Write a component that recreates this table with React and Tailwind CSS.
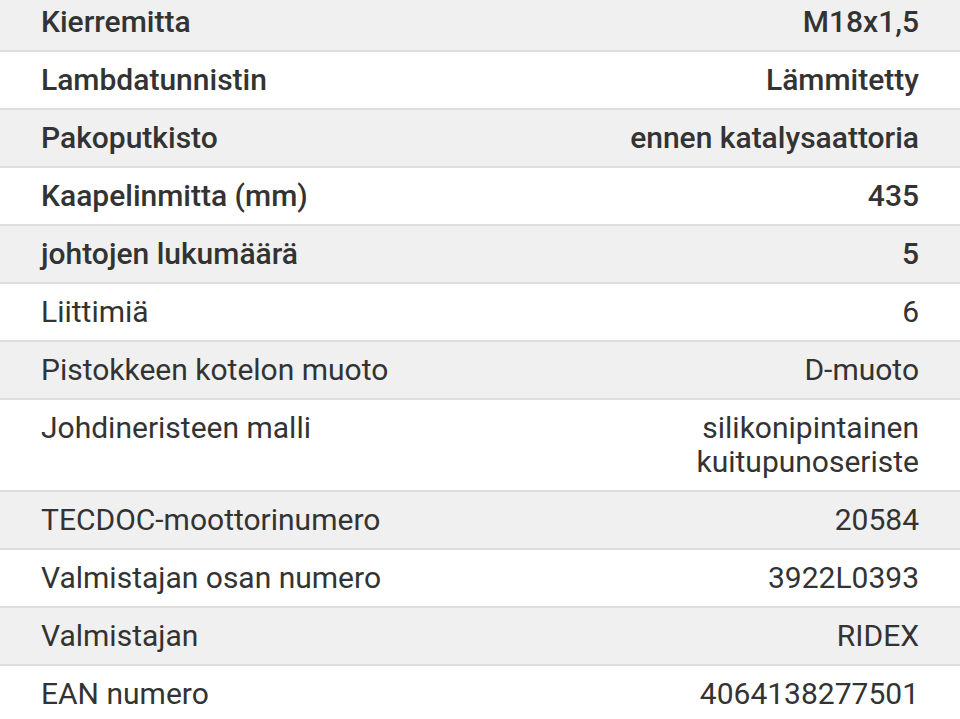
import React from 'react';

const rows = [
  { label: 'Kierremitta', value: 'M18x1,5', strong: true },
  { label: 'Lambdatunnistin', value: 'Lämmitetty', strong: true },
  { label: 'Pakoputkisto', value: 'ennen katalysaattoria', strong: true },
  { label: 'Kaapelinmitta (mm)', value: '435', strong: true },
  { label: 'johtojen lukumäärä', value: '5', strong: true },
  { label: 'Liittimiä', value: '6' },
  { label: 'Pistokkeen kotelon muoto', value: 'D-muoto' },
  { label: 'Johdineristeen malli', value: ['silikonipintainen', 'kuitupunoseriste'] },
  { label: 'TECDOC-moottorinumero', value: '20584' },
  { label: 'Valmistajan osan numero', value: '3922L0393' },
  { label: 'Valmistajan', value: 'RIDEX' },
  { label: 'EAN numero', value: '4064138277501' },
];

const SpecRow = ({ row, index }) => {
  const bg = index % 2 === 0 ? 'bg-[#f0f0f0]' : 'bg-white';
  const weight = row.strong ? 'font-medium' : 'font-normal';
  return (
    <div className={`flex justify-between gap-6 px-[41px] py-[11px] border-b-2 border-[#dedede] ${bg} ${weight}`}>
      <div className="leading-[34px]">{row.label}</div>
      <div className="text-right leading-[34px]">
        {Array.isArray(row.value) ? row.value.map((v) => <div key={v}>{v}</div>) : row.value}
      </div>
    </div>
  );
};

export default function App() {
  return (
    <div className="w-[960px] h-[719px] overflow-hidden bg-white">
      <div className="mt-[-6px] text-[30px] text-[#333333] font-['Roboto',sans-serif]">
        {rows.map((row, i) => (
          <SpecRow key={row.label} row={row} index={i} />
        ))}
      </div>
    </div>
  );
}
